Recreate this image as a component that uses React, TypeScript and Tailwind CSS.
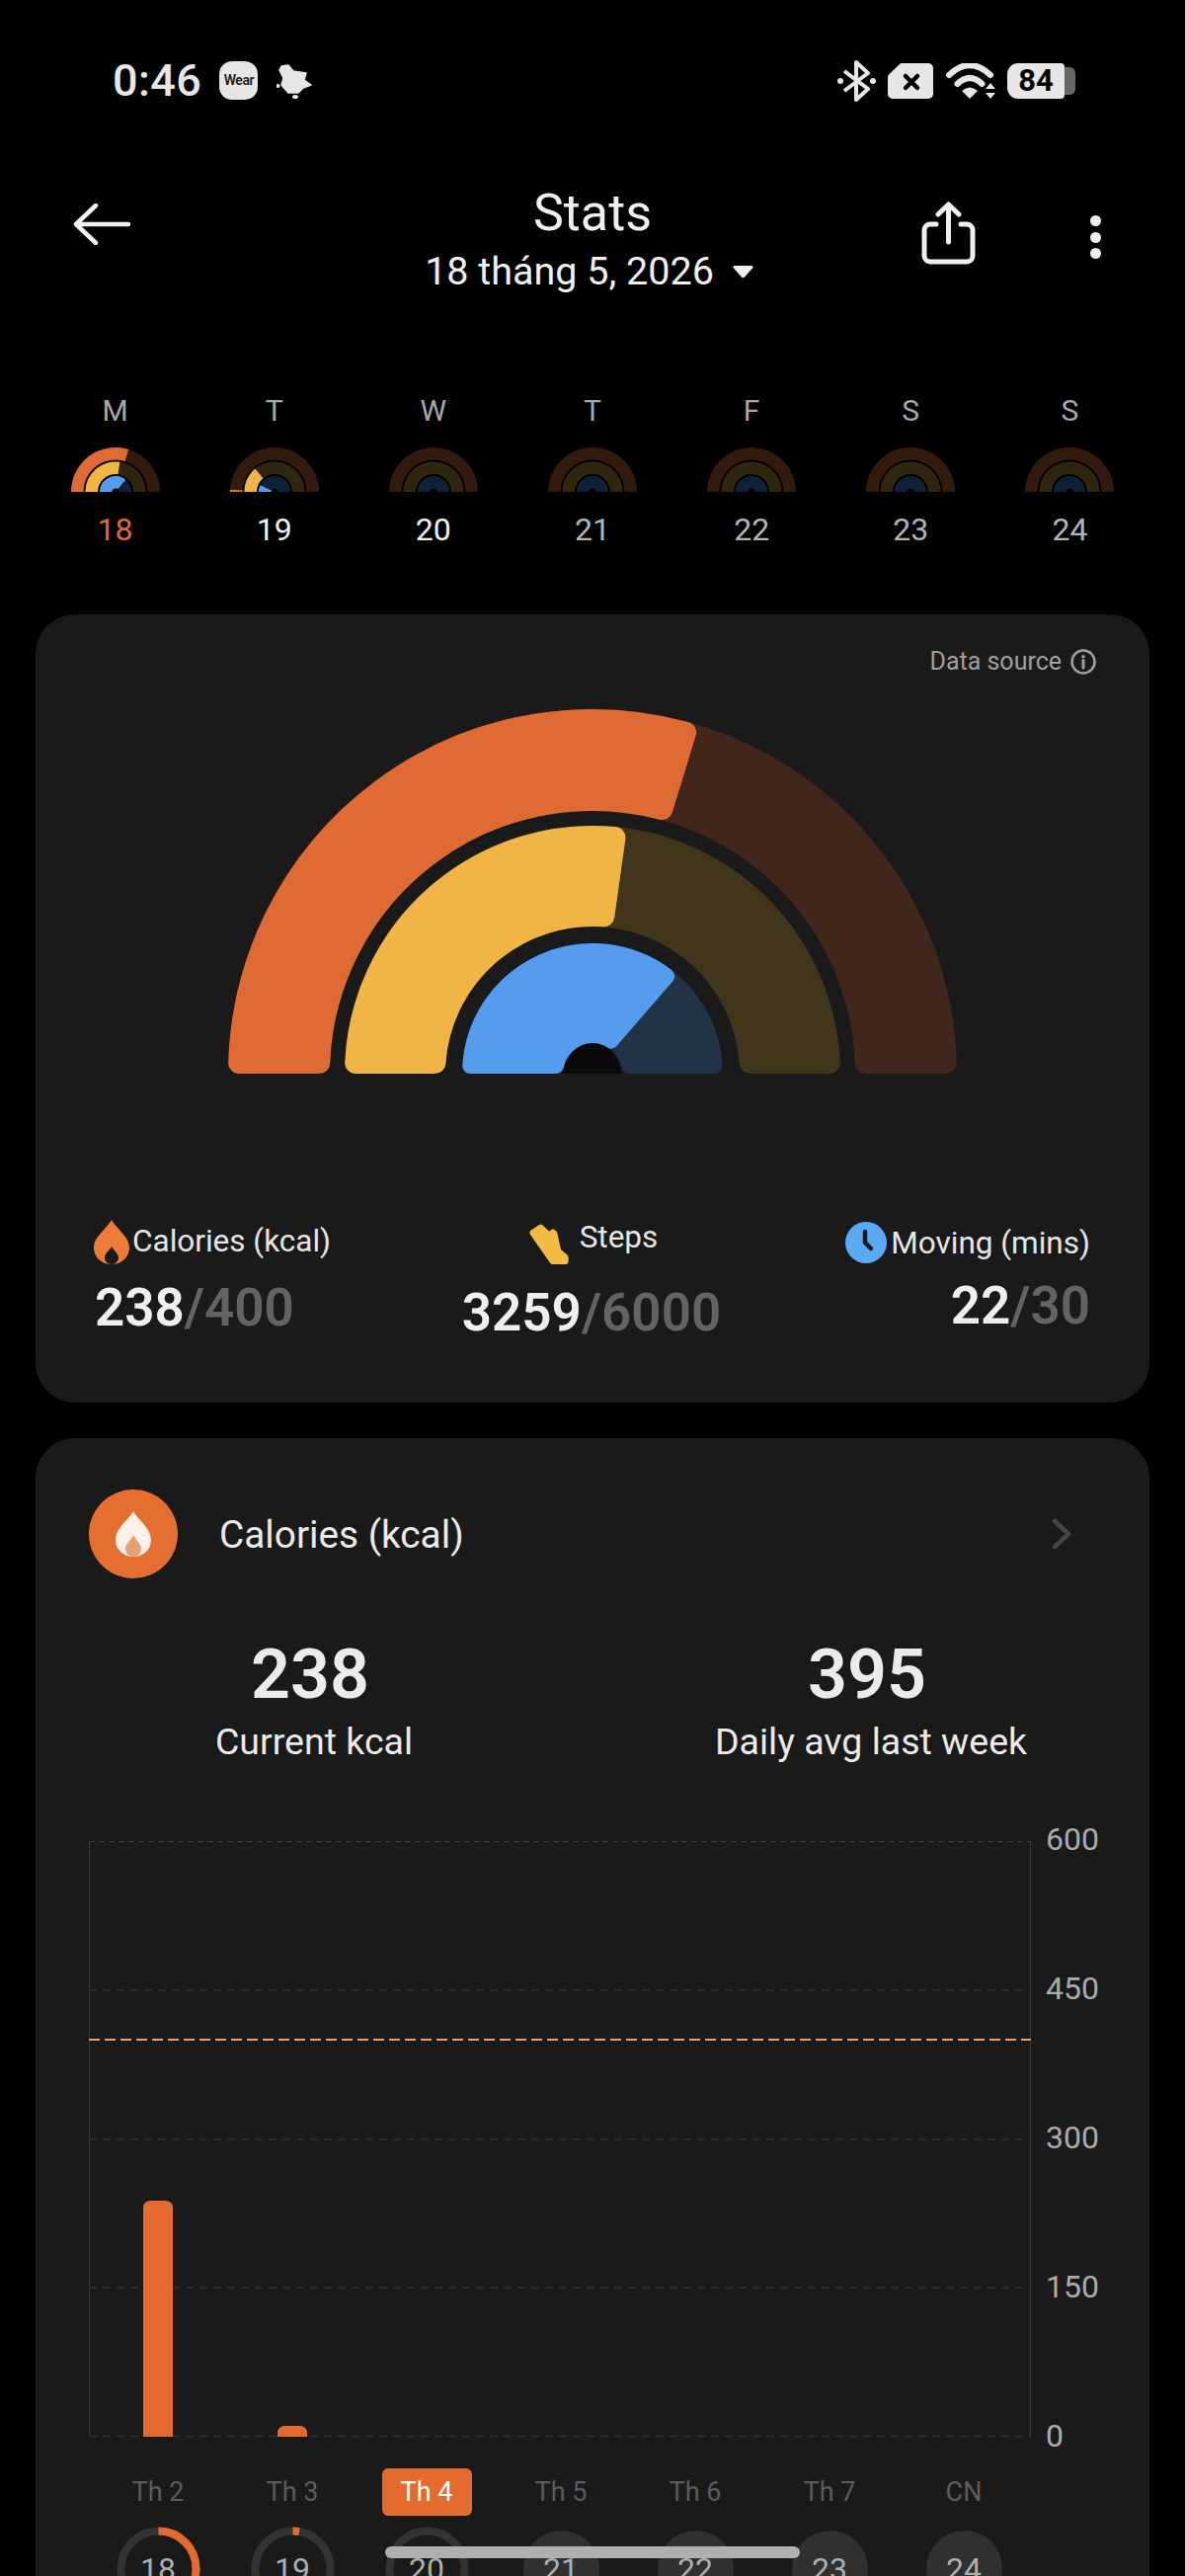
const ORANGE = '#E06A33'
const YELLOW = '#F0B544'
const BLUE = '#539CEE'

const WEEK = [
  { letter: 'M', day: 18, color: 'text-[#E2693A]', sweeps: [107, 98, 130] },
  { letter: 'T', day: 19, color: 'text-[#f0f0f0]', sweeps: [3, 50, 25] },
  { letter: 'W', day: 20, color: 'text-[#f0f0f0]', sweeps: [0, 0, 0] },
  { letter: 'T', day: 21, color: 'text-[#b4b4b4]', sweeps: [0, 0, 0] },
  { letter: 'F', day: 22, color: 'text-[#b4b4b4]', sweeps: [0, 0, 0] },
  { letter: 'S', day: 23, color: 'text-[#b4b4b4]', sweeps: [0, 0, 0] },
  { letter: 'S', day: 24, color: 'text-[#b4b4b4]', sweeps: [0, 0, 0] },
]

const CHART_DAYS = [
  { label: 'Th 2', day: 18, sweep: 214 },
  { label: 'Th 3', day: 19, sweep: 10 },
  { label: 'Th 4', day: 20, sweep: 0, selected: true },
  { label: 'Th 5', day: 21 },
  { label: 'Th 6', day: 22 },
  { label: 'Th 7', day: 23 },
  { label: 'CN', day: 24 },
]

// band of a half ring, from the left foot clockwise over `sweep` degrees.
// k insets the outline; stroking it with 2k gives the round corners
function bandPath(cx: number, cy: number, ro: number, ri: number, sweep: number, k = 0) {
  const out = ro - k
  const inn = ri + k
  const footOut = Math.sqrt(out * out - k * k)
  const footIn = Math.sqrt(inn * inn - k * k)
  const start = `M${cx - footOut} ${cy - k} A${out} ${out} 0 0 1 `
  const back = (x: number, y: number) => `L${x} ${y} A${inn} ${inn} 0 0 0 ${cx - footIn} ${cy - k} Z`
  if (sweep >= 180) return start + `${cx + footOut} ${cy - k} ` + back(cx + footIn, cy - k)
  const tOut = ((180 - sweep) * Math.PI) / 180 + k / out
  const tIn = ((180 - sweep) * Math.PI) / 180 + k / inn
  return (
    start +
    `${cx + out * Math.cos(tOut)} ${cy - out * Math.sin(tOut)} ` +
    back(cx + inn * Math.cos(tIn), cy - inn * Math.sin(tIn))
  )
}

function MiniRings({ sweeps }: { sweeps: number[] }) {
  const rings = [
    { ro: 45, ri: 32.5, track: '#321a0c', fill: ORANGE },
    { ro: 30.6, ri: 18, track: '#2f260d', fill: YELLOW },
    { ro: 16, ri: 3.6, track: '#0f2136', fill: BLUE },
  ]
  return (
    <svg width="90" height="45" viewBox="0 0 90 45">
      {rings.map((r, i) => (
        <g key={i}>
          <path d={bandPath(45, 45, r.ro, r.ri, 180)} fill={r.track} />
          {sweeps[i] > 0 && <path d={bandPath(45, 45, r.ro, r.ri, sweeps[i])} fill={r.fill} />}
        </g>
      ))}
    </svg>
  )
}

function Gauge() {
  const rings = [
    { ro: 369, ri: 266, track: '#41261b', fill: ORANGE, sweep: 107, k: 11 },
    { ro: 251, ri: 149, track: '#41351b', fill: YELLOW, sweep: 98, k: 11 },
    { ro: 132, ri: 30, track: '#213347', fill: BLUE, sweep: 131, k: 8 },
  ]
  return (
    <svg width="740" height="370" viewBox="0 0 740 370" className="mx-auto block">
      {rings.map((r, i) => (
        <g key={i} strokeLinejoin="round">
          <path d={bandPath(370, 370, r.ro, r.ri, 180, r.k)} fill={r.track} stroke={r.track} strokeWidth={r.k * 2} />
          <path d={bandPath(370, 370, r.ro, r.ri, r.sweep, r.k)} fill={r.fill} stroke={r.fill} strokeWidth={r.k * 2} />
        </g>
      ))}
      <path d="M341 370 A29 31 0 0 1 399 370 Z" fill="#0a0a0a" />
    </svg>
  )
}

function FlameIcon() {
  return (
    <svg width="36" height="45" viewBox="0 0 36 45" className="shrink-0">
      <path d="M18 0 C22 8 36 17 36 28 C36 38 28 45 18 45 C8 45 0 38 0 28 C0 17 14 8 18 0 Z" fill="#EE7C36" />
      <path d="M18 27 C20 31 25 34 25 38 C25 42 22 45 18 45 C14 45 11 42 11 38 C11 34 16 31 18 27 Z" fill="#1a1a1a" />
    </svg>
  )
}

function ShoeIcon() {
  return (
    <svg width="40" height="41" viewBox="0 0 40 41" className="shrink-0">
      <path
        d="M1 7 L10 1 Q11.500 0 13 1 L20 7.500 L24 5 L28 8 L32 26 L39 32 Q40.500 36 39 40 Q38.500 41 37 41 L24 41 Q22 41 21 39.500 L1 11 Q0 9 1 7 Z"
        fill="#F4BB43"
      />
    </svg>
  )
}

function ClockIcon() {
  return (
    <svg width="42" height="42" viewBox="0 0 42 42" className="shrink-0">
      <circle cx="21" cy="21" r="21" fill="#5AA9F5" />
      <path d="M20 10 V21 L26 27" fill="none" stroke="#1a1a1a" strokeWidth="4.500" strokeLinecap="round" strokeLinejoin="round" />
    </svg>
  )
}

function DayRing({ sweep }: { sweep: number }) {
  const r = 38
  const c = 2 * Math.PI * r
  return (
    <svg width="85" height="85" viewBox="0 0 85 85" className="absolute inset-0">
      <circle cx="42.500" cy="42.500" r={r} fill="none" stroke="#333333" strokeWidth="8" />
      {sweep > 0 && (
        <circle
          cx="42.500"
          cy="42.500"
          r={r}
          fill="none"
          stroke="#E46B2D"
          strokeWidth="8"
          strokeDasharray={`${(c * sweep) / 360} ${c}`}
          transform="rotate(-90 42.500 42.500)"
        />
      )}
    </svg>
  )
}

function StatusBar() {
  return (
    <div className="flex h-[162px] items-center justify-between pl-[114px] pr-[111px] pt-[1px]">
      <div className="flex items-center">
        <span className="text-[45px] font-medium leading-none tracking-[0.01em] text-[#e6e6e6]">0:46</span>
        <div className="ml-[18px] flex h-[39px] w-[39px] items-center justify-center rounded-[13px] bg-[#e6e6e6] text-[14px] font-semibold tracking-[-0.03em] text-[#1a1a1a]">
          Wear
        </div>
        <svg width="36" height="36" viewBox="0 0 36 36" className="ml-[19px]">
          <path
            d="M3 7 L5 3 L12 2 L17 8 L30 10 L28 17 L35 22 L27 25 L22 30 L12 30 L5 22 L7 15 Z"
            fill="#e6e6e6"
            stroke="#e6e6e6"
            strokeWidth="1.500"
            strokeLinejoin="round"
          />
          <circle cx="1.500" cy="23" r="2" fill="#e6e6e6" />
          <ellipse cx="19" cy="34" rx="3" ry="2" fill="#e6e6e6" />
        </svg>
      </div>
      <div className="flex items-center">
        <svg width="39" height="42" viewBox="0 0 39 42">
          <path d="M7 11 L31 29 L19 40 V2 L31 13 L7 31" fill="none" stroke="#e6e6e6" strokeWidth="4" strokeLinejoin="round" />
          <circle cx="3" cy="21" r="3" fill="#e6e6e6" />
          <circle cx="36" cy="21" r="3" fill="#e6e6e6" />
        </svg>
        <svg width="46" height="36" viewBox="0 0 46 36" className="ml-[12px]">
          <path d="M14 0 H41 A5 5 0 0 1 46 5 V31 A5 5 0 0 1 41 36 H5 A5 5 0 0 1 0 31 V14 Q0 12 1.500 11 L12 1 Q13 0 14 0 Z" fill="#e6e6e6" />
          <path d="M18 13 L30 25 M30 13 L18 25" stroke="#000000" strokeWidth="4.500" strokeLinecap="round" />
        </svg>
        <svg width="50" height="36" viewBox="0 0 50 36" className="ml-[13px]">
          <path d="M3 12 Q24 -8 45 12" fill="none" stroke="#e6e6e6" strokeWidth="6" strokeLinecap="round" />
          <path d="M11.500 21 Q24 9 36.500 21" fill="none" stroke="#e6e6e6" strokeWidth="6" strokeLinecap="round" />
          <path d="M16 28 Q24 21 32 28 L25 35 Q24 36 23 35 Z" fill="#e6e6e6" />
          <path d="M45 20 L50 26 H40 Z M40 30 H50 L45 36 Z" fill="#e6e6e6" />
        </svg>
        <div className="ml-[12px] flex items-center">
          <div className="flex h-[36px] w-[58px] items-center justify-center rounded-l-[11px] rounded-r-[4px] bg-[#e6e6e6] text-[31px] font-bold leading-none text-black">
            84
          </div>
          <div className="h-[28px] w-[11px] rounded-r-[6px] bg-[#666666]" />
        </div>
      </div>
    </div>
  )
}

function Header() {
  return (
    <div className="mt-[22px] grid grid-cols-[1fr_auto_1fr] items-start">
      <svg width="60" height="42" viewBox="0 0 60 42" className="ml-[74px] mt-[22px]">
        <path d="M56 21 H4 M23 2 L3 21 L23 40" fill="none" stroke="#f0f0f0" strokeWidth="4.500" strokeLinecap="round" strokeLinejoin="round" />
      </svg>
      <div className="flex flex-col items-center text-[#efefef]">
        <h1 className="pt-[2px] text-[52px] font-normal leading-[60px]">Stats</h1>
        <div className="mr-[6px] mt-[4px] flex items-center gap-[18px]">
          <span className="text-[39.500px] leading-[50px]">18 tháng 5, 2026</span>
          <svg width="23" height="14" viewBox="0 0 23 14">
            <path d="M3 1 H20 Q22.500 1 21 3.500 L13 12.500 Q11.500 14 10 12.500 L2 3.500 Q0.500 1 3 1 Z" fill="#efefef" />
          </svg>
        </div>
      </div>
      <div className="flex items-start justify-end pr-[85px]">
        <svg width="55" height="64" viewBox="0 0 55 64" className="mt-[20px]">
          <path
            d="M15 23 H9 A6 6 0 0 0 3 29 V55 A6 6 0 0 0 9 61 H46 A6 6 0 0 0 52 55 V29 A6 6 0 0 0 46 23 H40 M27.500 41 V4 M17 13 L27.500 3 L38 13"
            fill="none"
            stroke="#f0f0f0"
            strokeWidth="5"
            strokeLinecap="round"
            strokeLinejoin="round"
          />
        </svg>
        <div className="ml-[116px] mt-[34px] flex flex-col gap-[5.500px]">
          <div className="h-[11px] w-[11px] rounded-full bg-[#f0f0f0]" />
          <div className="h-[11px] w-[11px] rounded-full bg-[#f0f0f0]" />
          <div className="h-[11px] w-[11px] rounded-full bg-[#f0f0f0]" />
        </div>
      </div>
    </div>
  )
}

function WeekStrip() {
  return (
    <div className="mx-[36px] mt-[98px] grid grid-cols-7">
      {WEEK.map((d) => (
        <div key={d.day} className="flex flex-col items-center">
          <span className="text-[30px] leading-[36px] text-[#a8a8a8]">{d.letter}</span>
          <div className="mt-[19px] h-[45px]">
            <MiniRings sweeps={d.sweeps} />
          </div>
          <span className={`mt-[18px] text-[32px] leading-[40px] ${d.color}`}>{d.day}</span>
        </div>
      ))}
    </div>
  )
}

function Value({ done, goal }: { done: string; goal: string }) {
  return (
    <div className="text-[53px] font-semibold leading-[60px]">
      <span className="text-[#efefef]">{done}</span>
      <span className="text-[#636363]">/{goal}</span>
    </div>
  )
}

function SummaryCard() {
  return (
    <section className="mx-[36px] mt-[66px] h-[798px] rounded-[40px] bg-[#1a1a1a]">
      <div className="flex items-center justify-end gap-[9px] pr-[54px] pt-[33px] text-[#a0a0a0]">
        <span className="text-[25px] leading-[30px]">Data source</span>
        <svg width="26" height="26" viewBox="0 0 26 26">
          <circle cx="13" cy="13" r="11.500" fill="none" stroke="#a0a0a0" strokeWidth="2.500" />
          <circle cx="13" cy="7.800" r="1.800" fill="#a0a0a0" />
          <path d="M13 11.500 V19" stroke="#a0a0a0" strokeWidth="3" strokeLinecap="round" />
        </svg>
      </div>
      <div className="mt-[32px]">
        <Gauge />
      </div>
      <div className="mt-[148px] grid grid-cols-[1fr_auto_1fr] items-start pl-[58px] pr-[60px] text-[31.500px] text-[#e6e6e6]">
        <div className="flex flex-col items-start">
          <div className="ml-[1px] flex h-[45px] items-center gap-[3px]">
            <FlameIcon />
            <span className="mb-[1px] leading-[40px]">Calories (kcal)</span>
          </div>
          <div className="ml-[2px] mt-[14px]">
            <Value done="238" goal="400" />
          </div>
        </div>
        <div className="mt-[4px] flex flex-col items-center">
          <div className="ml-[4px] flex h-[41px] items-start gap-[11px]">
            <ShoeIcon />
            <span className="pt-[1px] leading-[26px]">Steps</span>
          </div>
          <div className="mt-[19px]">
            <Value done="3259" goal="6000" />
          </div>
        </div>
        <div className="mt-[2px] flex flex-col items-end">
          <div className="flex h-[42px] items-center gap-[4px]">
            <ClockIcon />
            <span className="mt-[2px] leading-[40px]">Moving (mins)</span>
          </div>
          <div className="mt-[13px]">
            <Value done="22" goal="30" />
          </div>
        </div>
      </div>
    </section>
  )
}

function Chart() {
  return (
    <div className="ml-[54px] mt-[80px] flex h-[604px] items-start">
      <svg width="955" height="604" viewBox="0 0 955 604" className="shrink-0">
        <path d="M0.500 0 V603 M953.500 0 V603" stroke="#383838" strokeWidth="1" />
        <path d="M0 0.500 H954" stroke="#3c3c3c" strokeWidth="1" strokeDasharray="6 4" />
        <path d="M0 151 H954 M0 302 H954 M0 452 H954" stroke="#303030" strokeWidth="1.500" strokeDasharray="8 6" />
        <path d="M0 602.500 H954" stroke="#333333" strokeWidth="1.500" strokeDasharray="8 6" />
        <path d="M0 201 H954" stroke="#E8A070" strokeWidth="2" strokeDasharray="11 5" />
        <path d="M55 603 V372 Q55 364 63 364 H77 Q85 364 85 372 V603 Z" fill="#E46B2D" />
        <path d="M191 603 V600 Q191 592 199 592 H213 Q221 592 221 600 V603 Z" fill="#E46B2D" />
      </svg>
      <div className="-mt-[20px] ml-[14px] flex h-[640px] flex-col justify-between text-[32px] leading-[36px] text-[#ababab]">
        <span>600</span>
        <span>450</span>
        <span>300</span>
        <span>150</span>
        <span>0</span>
      </div>
    </div>
  )
}

function CaloriesCard() {
  return (
    <section className="mx-[36px] mt-[36px] h-[1200px] rounded-[40px] bg-[#1a1a1a]">
      <div className="flex items-center pl-[54px] pr-[79px] pt-[52px]">
        <div className="flex h-[90px] w-[90px] items-center justify-center rounded-full bg-[#E46F30]">
          <svg width="40" height="46" viewBox="0 0 40 46">
            <path d="M20 0 C24 8 38 17 38 29 C38 39 30 46 20 46 C10 46 2 39 2 29 C2 17 16 8 20 0 Z" fill="#FDF1E9" />
            <path d="M20 24 C22 29 28 33 28 38 C28 43 24 46 20 46 C16 46 12 43 12 38 C12 33 18 29 20 24 Z" fill="#E6A173" />
          </svg>
        </div>
        <span className="ml-[42px] pt-[2px] text-[38.800px] leading-[50px] text-[#ebebeb]">Calories (kcal)</span>
        <svg width="20" height="32" viewBox="0 0 20 32" className="ml-auto">
          <path d="M3 3 L17 16 L3 29" fill="none" stroke="#454545" strokeWidth="4.500" strokeLinecap="round" strokeLinejoin="round" />
        </svg>
      </div>
      <div className="mt-[57px] grid grid-cols-2 text-[#ebebeb]">
        <div className="flex flex-col items-center">
          <span className="pr-[8px] text-[70px] font-semibold leading-[80px]">238</span>
          <span className="mt-[6px] text-[37.500px] leading-[44px]">Current kcal</span>
        </div>
        <div className="flex flex-col items-center">
          <span className="pr-[8px] text-[70px] font-semibold leading-[80px]">395</span>
          <span className="mt-[6px] text-[37.500px] leading-[44px]">Daily avg last week</span>
        </div>
      </div>
      <div className="-mt-[1px]">
        <Chart />
      </div>
      <div className="ml-[56px] mt-[31px] grid w-[952px] grid-cols-7">
        {CHART_DAYS.map((d) => (
          <div key={d.day} className="flex flex-col items-center">
            <span
              className={`flex h-[48px] w-[91px] items-center justify-center rounded-[6px] text-[27px] ${
                d.selected ? 'bg-[#E46B2D] text-white' : 'text-[#5c5c5c]'
              }`}
            >
              {d.label}
            </span>
            <div className="relative mt-[11px] flex h-[85px] w-[85px] items-center justify-center">
              {d.sweep !== undefined ? (
                <DayRing sweep={d.sweep} />
              ) : (
                <div className="absolute inset-[4px] rounded-full bg-[#303030]" />
              )}
              <span className="relative text-[32px] leading-[40px] text-[#aeaeae]">{d.day}</span>
            </div>
          </div>
        ))}
      </div>
    </section>
  )
}

export default function App() {
  return (
    <main className="relative h-[2608px] w-[1200px] overflow-hidden bg-black [font-family:Roboto,sans-serif]">
      <StatusBar />
      <Header />
      <WeekStrip />
      <SummaryCard />
      <CaloriesCard />
      {/* gesture pill lies over the page */}
      <div className="absolute bottom-[18px] left-[390px] h-[12px] w-[420px] rounded-[6px] bg-[#b0b0b0]" />
    </main>
  )
}
